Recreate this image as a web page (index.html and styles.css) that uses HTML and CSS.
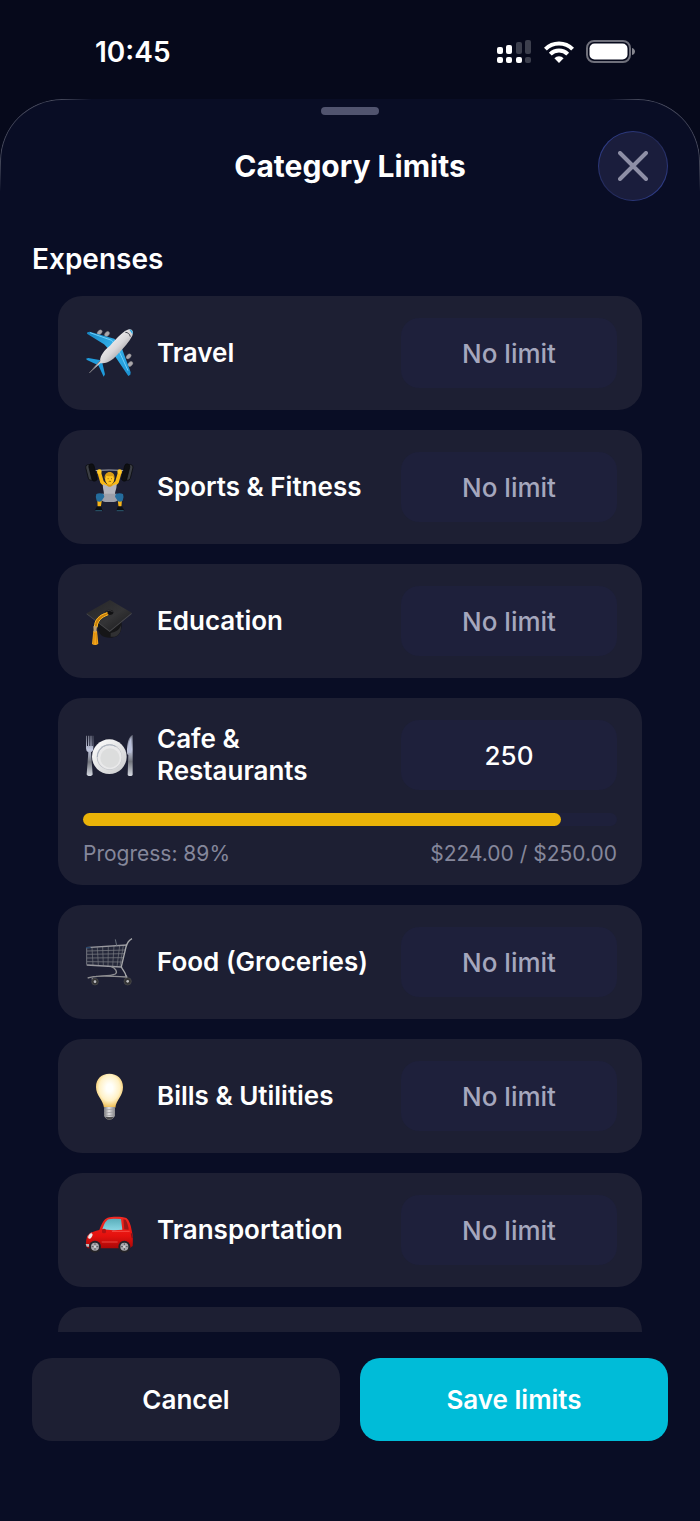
FILE: index.html
```
<!DOCTYPE html>
<html lang="en">
<head>
  <meta charset="UTF-8">
  <meta name="viewport" content="width=device-width, initial-scale=1">
  <title>Category Limits</title>
  <link rel="stylesheet" href="styles.css">
</head>
<body>

<div class="status-bar">
  <span class="time">10:45</span>
  <div class="status-icons">
    <svg width="35" height="24" viewBox="0 0 35 24" fill="#fff">
      <rect x="0" y="7" width="6" height="7" rx="2"/>
      <rect x="9" y="5" width="6" height="9" rx="2"/>
      <rect x="19" y="2" width="6" height="12" rx="2" opacity=".22"/>
      <rect x="28" y="0" width="6" height="14" rx="2" opacity=".22"/>
      <rect x="0" y="17" width="6" height="6" rx="2"/>
      <rect x="9" y="17" width="6" height="6" rx="2"/>
      <rect x="19" y="17" width="6" height="6" rx="2"/>
      <rect x="28" y="17" width="6" height="6" rx="2" opacity=".22"/>
    </svg>
    <svg width="30" height="22" viewBox="0 0 30 22" fill="none" stroke="#fff" stroke-width="4">
      <path d="M1.4 8.1a19.2 19.2 0 0 1 27.2 0"/>
      <path d="M6.3 13.2a12.3 12.3 0 0 1 17.4 0"/>
      <path d="M10.4 17.2a6.5 6.5 0 0 1 9.2 0L15 22z" fill="#fff" stroke="none"/>
    </svg>
    <svg width="50" height="24" viewBox="0 0 50 24">
      <rect x="1" y="1" width="43" height="21" rx="7" fill="none" stroke="#6f707b" stroke-width="2"/>
      <rect x="3.5" y="3.5" width="38" height="16" rx="5" fill="#fff"/>
      <path d="M46 8c4 1 4 6 0 7z" fill="#85868f"/>
    </svg>
  </div>
</div>

<main class="sheet">
  <div class="handle"></div>
  <header class="sheet-header">
    <h1>Category Limits</h1>
    <button class="close" aria-label="Close">
      <svg width="30" height="30" viewBox="0 0 30 30" stroke="#8e8fa6" stroke-width="4" stroke-linecap="round">
        <path d="M2 2l26 26M28 2L2 28"/>
      </svg>
    </button>
  </header>

  <h2>Expenses</h2>

  <div class="list">
    <div class="card">
      <div class="row">
        <svg class="icon" viewBox="99 108 162 162">
          <defs>
            <linearGradient id="wing" x1="0" y1="0" x2="1" y2="1">
              <stop offset="0" stop-color="#1683c0"/><stop offset=".5" stop-color="#35b5ef"/><stop offset="1" stop-color="#1b8fcf"/>
            </linearGradient>
            <linearGradient id="hull" x1="0" y1="0" x2="1" y2="1">
              <stop offset=".25" stop-color="#fafafa"/><stop offset=".52" stop-color="#d9d7da"/><stop offset=".75" stop-color="#8f8c90"/>
            </linearGradient>
          </defs>
          <g fill="#aaa7ab" stroke="#67666c" stroke-width="1">
            <ellipse cx="149" cy="127" rx="9" ry="6" transform="rotate(-45 149 127)"/>
            <ellipse cx="171" cy="132" rx="9" ry="6" transform="rotate(-45 171 132)"/>
            <ellipse cx="236" cy="199" rx="9" ry="6" transform="rotate(-45 236 199)"/>
            <ellipse cx="241" cy="222" rx="9" ry="6" transform="rotate(-45 241 222)"/>
          </g>
          <path d="M112 127l7-2 74 21 20 22 29 79-1 7-6 4-44-65-29-30-51-32z" fill="url(#wing)"/>
          <path d="M108 206l7-2 38 7 4 8 8 34-4 7-16-34-34-16z" fill="#1f9bdc"/>
          <path d="M120 128l65 23 8 10M206 181l28 61" stroke="#6fd0fa" stroke-width="3" fill="none"/>
          <path d="M118 249l32-37c2-18 12-30 30-45 23-25 42-46 57-49 12-1 14 9 10 19-9 19-25 35-43 55-20 23-34 28-53 28z" fill="url(#hull)"/>
          <path d="M226 127c8 0 13 5 15 13" stroke="#45474f" stroke-width="3" fill="none"/>
          <path d="M238 119c8 0 12 6 9 14-3-6-5-9-9-14z" fill="#2caee8"/>
          <path d="M118 249l33-37" stroke="#77757a" stroke-width="3"/>
        </svg>
        <label for="travel">Travel</label>
        <input id="travel" type="text" inputmode="decimal" placeholder="No limit">
      </div>
    </div>

    <div class="card">
      <div class="row">
        <svg class="icon" viewBox="39 60 162 162">
          <path d="M66 93c30-4 72-4 104 0" stroke="#a9abb3" stroke-width="3" fill="none"/>
          <g stroke="#08090b" stroke-width="2">
            <rect x="51" y="73" width="17" height="48" rx="8" fill="#3c3f45" transform="rotate(-14 60 97)"/>
            <rect x="61" y="71" width="16" height="53" rx="8" fill="#0e0f12" transform="rotate(-14 69 98)"/>
            <rect x="168" y="73" width="17" height="48" rx="8" fill="#3c3f45" transform="rotate(14 176 97)"/>
            <rect x="159" y="71" width="16" height="53" rx="8" fill="#0e0f12" transform="rotate(14 167 98)"/>
          </g>
          <path d="M88 98l8 28 16 16M149 98l-8 28-16 16" stroke="#f8b916" stroke-width="11" stroke-linecap="round" stroke-linejoin="round" fill="none"/>
          <circle cx="88" cy="95" r="7" fill="#ffc927"/>
          <circle cx="149" cy="95" r="7" fill="#ffc927"/>
          <path d="M82 178h14l-4 26h-9zM143 178h13l-2 26h-8z" fill="#f6b318"/>
          <path d="M99 132l12 5h16l12-5c3 11-4 21-4 31l4 17c-10 8-32 8-42 0l5-17c0-10-5-20-3-31z" fill="#b4b5bd"/>
          <path d="M96 161h45l8 13c-8 14-20 12-30 12s-22 2-30-12z" fill="#9d9fa9"/>
          <path d="M111 129h16v7c-4 6-12 6-16 0z" fill="#dc980d"/>
          <ellipse cx="119" cy="116" rx="14" ry="18" fill="#ffc523"/>
          <path d="M104 117c-4-28 35-27 29 0l-5-9c-7 2-13 1-20-1z" fill="#d99c15"/>
          <path d="M113 116h3M123 116h3M116 125q4-3 7 0" stroke="#68420b" stroke-width="2" fill="none"/>
          <path d="M79 162q11-5 22 1l2 7-9 14q-7 3-14-2-5-10-1-20zM137 163q11-6 22-1 4 10-1 20-7 5-14 2l-9-14z" fill="#246c9d"/>
          <path d="M81 199h12l5 13H75c0-5 4-7 6-13zM144 199h12c1 5 6 7 7 13h-24z" fill="#0c0f14"/>
          <path d="M76 212h20M140 212h21" stroke="#377b98" stroke-width="2"/>
        </svg>
        <label for="sports">Sports &amp; Fitness</label>
        <input id="sports" type="text" inputmode="decimal" placeholder="No limit">
      </div>
    </div>

    <div class="card">
      <div class="row">
        <svg class="icon" viewBox="39 57 162 162">
          <defs>
            <linearGradient id="cap" x1="0" y1="0" x2="1" y2="1">
              <stop offset="0" stop-color="#252527"/><stop offset=".55" stop-color="#343436"/><stop offset="1" stop-color="#171719"/>
            </linearGradient>
          </defs>
          <path d="M82 135l72-2c3 22 0 42-13 50-14 8-37 7-47-2-9-9-13-25-12-46z" fill="#161618"/>
          <path d="M122 174c16-2 26-10 31-23 1 17-4 26-12 31-7 4-14 4-19 3z" fill="#303032"/>
          <path d="M50 115l70-40 65 38-66 56z" fill="url(#cap)"/>
          <path d="M50 115l69 52 66-54v4l-66 54-69-53z" fill="#48484b"/>
          <ellipse cx="118" cy="112" rx="12" ry="8" fill="#111113"/>
          <path d="M108 109q10-7 20 1" stroke="#4b4b4e" stroke-width="2" fill="none"/>
          <path d="M113 115c-24 8-35 20-36 42" stroke="#c77c08" stroke-width="9" fill="none"/>
          <path d="M112 113c-26 8-38 21-39 43M115 119c-21 8-32 18-34 38" stroke="#ffbd27" stroke-width="3" fill="none"/>
          <path d="M70 167h11l4 39c-5 5-14 5-19 1z" fill="#f3a51b"/>
          <path d="M70 154h11l-2 16h-8z" fill="#c0a06b"/>
          <path d="M73 174l-2 33M78 173l2 33" stroke="#ca7c08" stroke-width="2"/>
        </svg>
        <label for="education">Education</label>
        <input id="education" type="text" inputmode="decimal" placeholder="No limit">
      </div>
    </div>

    <div class="card">
      <div class="row">
        <svg class="icon" viewBox="99 114 162 162">
          <defs>
            <linearGradient id="steel" x1="0" y1="0" x2="0" y2="1">
              <stop offset="0" stop-color="#6d7080"/><stop offset=".35" stop-color="#c2c8df"/><stop offset=".65" stop-color="#72757d"/><stop offset="1" stop-color="#d6dae3"/>
            </linearGradient>
            <linearGradient id="plate" x1="0" y1="0" x2="1" y2="1">
              <stop offset="0" stop-color="#fff"/><stop offset="1" stop-color="#c9cacc"/>
            </linearGradient>
          </defs>
          <path d="M108 137h3v31h3v-31h4v31h3v-31h4v31h3v-31h2v38q0 9-7 12l5 66c0 7-18 7-18 0l5-66q-7-3-7-12z" fill="url(#steel)"/>
          <path d="M248 135v119c0 5-15 5-15 0l2-59q-5-1-4-9c0-25 5-47 17-51z" fill="url(#steel)"/>
          <path d="M244 142c-7 9-10 24-10 46h10z" fill="#b8bfd9"/>
          <circle cx="178" cy="200" r="52" fill="url(#plate)"/>
          <circle cx="178" cy="201" r="38" fill="#bfc2c8"/>
          <circle cx="179" cy="202" r="36" fill="#e9e9ea"/>
          <circle cx="180" cy="204" r="29" fill="#dcdddd"/>
          <path d="M142 201a37 37 0 0 1 55-32" stroke="#aab2bf" stroke-width="3" fill="none"/>
        </svg>
        <label for="cafe">Cafe &amp; Restaurants</label>
        <input id="cafe" type="text" inputmode="decimal" placeholder="No limit" value="250">
      </div>
      <div class="track"><div class="fill" style="width: 89.6%"></div></div>
      <div class="progress-text">
        <span>Progress: 89%</span>
        <span>$224.00 / $250.00</span>
      </div>
    </div>

    <div class="card">
      <div class="row">
        <svg class="icon" viewBox="39 60 162 162" fill="none">
          <path d="M50 98l121-9-18 67-103-6z" fill="#25283a"/>
          <path d="M51 108l115-3M51 118l112-2M51 129l109-1M51 140l106 1" stroke="#85878d" stroke-width="2"/>
          <path d="M66 98l3 53M82 97l3 54M98 96l2 56M115 95l-1 58M132 93l-4 61M149 92l-8 63M160 91l-10 64" stroke="#777a81" stroke-width="2"/>
          <path d="M49 98l122-8M50 150l103 6" stroke="#9a9aa0" stroke-width="4"/>
          <path d="M50 98v51" stroke="#73767f" stroke-width="3"/>
          <path d="M48 98h14" stroke="#28476d" stroke-width="4"/>
          <path d="M186 71c-10 5-15 14-18 25l-14 59c4 11 11 14 14 28" stroke="#a7a8aa" stroke-width="4"/>
          <path d="M136 73l4 19" stroke="#68707b" stroke-width="3"/>
          <path d="M124 155c12 4 20 16 12 22-18 8-57 4-83 12M78 184c32-2 62 0 90 2" stroke="#8f8f92" stroke-width="4"/>
          <path d="M66 190l8 13M168 181l6 18" stroke="#9c9da0" stroke-width="5"/>
          <circle cx="75" cy="200" r="10" fill="#343435" stroke="#4d4d4e" stroke-width="2"/>
          <circle cx="173" cy="199" r="11" fill="#343435" stroke="#4d4d4e" stroke-width="2"/>
          <circle cx="75" cy="200" r="4" fill="#bdbdc0"/>
          <circle cx="173" cy="199" r="4" fill="#bdbdc0"/>
        </svg>
        <label for="food">Food (Groceries)</label>
        <input id="food" type="text" inputmode="decimal" placeholder="No limit">
      </div>
    </div>

    <div class="card">
      <div class="row">
        <svg class="icon" viewBox="39 57 162 162">
          <defs>
            <radialGradient id="glow" cx=".5" cy=".42" r=".58">
              <stop offset=".2" stop-color="#fffffa"/><stop offset=".65" stop-color="#fff1c5"/><stop offset="1" stop-color="#efbd53"/>
            </radialGradient>
            <linearGradient id="socket">
              <stop offset="0" stop-color="#77777a"/><stop offset=".45" stop-color="#e1e0e1"/><stop offset="1" stop-color="#858487"/>
            </linearGradient>
          </defs>
          <path d="M78 111c0-25 17-40 40-40s41 15 41 40c0 27-20 38-23 62h-34c-3-25-24-36-24-62z" fill="url(#glow)"/>
          <path d="M102 171h33v27q-7 11-17 11t-16-11z" fill="url(#socket)"/>
          <path d="M102 180l33-3M102 189l33-3M103 198l31-3" stroke="#98979b" stroke-width="2"/>
          <path d="M106 201h25l-7 8h-12z" fill="#4c4b4e"/>
        </svg>
        <label for="bills">Bills &amp; Utilities</label>
        <input id="bills" type="text" inputmode="decimal" placeholder="No limit">
      </div>
    </div>

    <div class="card">
      <div class="row">
        <svg class="icon" viewBox="39 54 162 162">
          <defs>
            <linearGradient id="paint" x1="0" y1="0" x2="0" y2="1">
              <stop offset="0" stop-color="#f22a23"/><stop offset=".6" stop-color="#e5110e"/><stop offset="1" stop-color="#a90808"/>
            </linearGradient>
            <linearGradient id="glass" x1="0" y1="0" x2="0" y2="1">
              <stop offset="0" stop-color="#5aaebb"/><stop offset="1" stop-color="#8ad5e2"/>
            </linearGradient>
          </defs>
          <path d="M63 180h115v9H63z" fill="#281c23"/>
          <path d="M48 174c0-23 13-34 40-39 7-19 14-33 25-37 17-4 43-3 56 1 9 7 13 20 16 37 4 14 4 31 3 47l-9 7H54c-5-4-7-8-6-16z" fill="url(#paint)"/>
          <path d="M97 133c5-15 10-26 19-30l15-2 22 1 4 32-26 2z" fill="url(#glass)"/>
          <path d="M160 103l7 1c5 9 8 19 9 30l-13-1z" fill="#9b1719"/>
          <path d="M126 139h53M95 171h48M66 143c-8 3-13 8-14 15" stroke="#ff665d" stroke-width="2" fill="none"/>
          <rect x="96" y="131" width="12" height="14" rx="5" fill="#b31313"/>
          <ellipse cx="61" cy="153" rx="5" ry="9" fill="#ecebed" transform="rotate(32 61 153)"/>
          <path d="M184 145l3 14" stroke="#81151a" stroke-width="4"/>
          <path d="M47 177h10l1 8h-8z" fill="#b8b8bb"/>
          <circle cx="75" cy="185" r="18" fill="#242328"/>
          <circle cx="163" cy="185" r="18" fill="#242328"/>
          <circle cx="75" cy="185" r="12" fill="#aaa9ad"/>
          <circle cx="163" cy="185" r="12" fill="#aaa9ad"/>
          <path d="M75 175v20M65 185h20M163 175v20M153 185h20" stroke="#5a595f" stroke-width="3"/>
          <circle cx="75" cy="185" r="4" fill="#d8d7d9"/>
          <circle cx="163" cy="185" r="4" fill="#d8d7d9"/>
        </svg>
        <label for="transport">Transportation</label>
        <input id="transport" type="text" inputmode="decimal" placeholder="No limit">
      </div>
    </div>

    <div class="card"></div>
  </div>

  <footer class="actions">
    <button class="cancel">Cancel</button>
    <button class="save">Save limits</button>
  </footer>
</main>

</body>
</html>
```

FILE: styles.css
```
* {
  box-sizing: border-box;
}
body {
  margin: 0;
  height: 100vh;
  display: flex;
  flex-direction: column;
  background: #06091b;
  color: #fff;
  font-family: Inter, "Liberation Sans", sans-serif;
}
button, input {
  font-family: inherit;
  border: none;
}
button {
  cursor: pointer;
}
h1, h2 {
  margin: 0;
  font-weight: 600;
}

.status-bar {
  display: flex;
  justify-content: space-between;
  align-items: center;
  padding: 32px 64px 27px 95px;
}
.time {
  font-size: 28px;
  line-height: 40px;
  font-weight: 600;
}
.status-icons {
  display: flex;
  align-items: center;
  gap: 12px;
}

.sheet {
  position: relative;
  flex: 1;
  min-height: 0;
  display: flex;
  flex-direction: column;
  padding-top: 8px;
  background: #090d25;
  border-radius: 62px 62px 0 0;
}
/* thin highlight that only shows round the top corners */
.sheet::before {
  content: "";
  position: absolute;
  top: 0;
  left: 0;
  right: 0;
  height: 92px;
  border: 1px solid rgba(255, 255, 255, 0.25);
  border-bottom: none;
  border-radius: 62px 62px 0 0;
  mask-image:
    linear-gradient(to right, #000 60px, transparent 92px, transparent calc(100% - 92px), #000 calc(100% - 60px)),
    linear-gradient(#000 60px, transparent);
  mask-composite: intersect;
  pointer-events: none;
}
.handle {
  width: 58px;
  height: 8px;
  margin: 0 auto;
  border-radius: 4px;
  background: #51546f;
}
.sheet-header {
  display: grid;
  grid-template-columns: 70px 1fr 70px;
  align-items: center;
  padding: 16px 32px 0;
}
h1 {
  grid-column: 2;
  text-align: center;
  font-size: 30px;
  line-height: 40px;
  font-weight: 700;
}
.close {
  display: flex;
  justify-content: center;
  align-items: center;
  height: 70px;
  padding: 0;
  border: 1px solid transparent;
  border-radius: 50%;
  background:
    linear-gradient(#1a1d3c, #1a1d3c) padding-box,
    linear-gradient(135deg, #34459c, #242b5c 45%, #242b5c 55%, #34459c) border-box;
}
h2 {
  padding: 38px 32px 17px;
  font-size: 28px;
  line-height: 40px;
}

.list {
  flex: 1;
  min-height: 0;
  overflow-y: auto;
  scrollbar-width: none;
  display: flex;
  flex-direction: column;
  gap: 20px;
  padding: 0 58px;
}
.card {
  flex-shrink: 0;
  min-height: 114px;
  padding: 22px 25px;
  border-radius: 24px;
  background: #1d1f33;
}
.row {
  display: flex;
  align-items: center;
  gap: 20px;
}
.icon {
  flex-shrink: 0;
  width: 54px;
  height: 54px;
}
.row label {
  flex: 1;
  font-size: 26px;
  line-height: 32px;
  font-weight: 600;
}
.row input {
  width: 216px;
  height: 70px;
  padding: 0;
  border-radius: 18px;
  background: #1e203b;
  color: #fff;
  font-size: 26px;
  font-weight: 500;
  text-align: center;
}
.row input::placeholder {
  color: #a5a7bd;
  opacity: 1;
}
.track {
  height: 13px;
  margin-top: 23px;
  border-radius: 7px;
  background: #1e203b;
}
.fill {
  height: 100%;
  border-radius: 7px;
  background: #eab308;
}
.progress-text {
  display: flex;
  justify-content: space-between;
  margin-top: 19px;
  color: #85879b;
  font-size: 21px;
  line-height: 18px;
}

.actions {
  display: grid;
  grid-template-columns: 1fr 1fr;
  gap: 20px;
  padding: 26px 32px 80px;
}
.actions button {
  height: 83px;
  border-radius: 20px;
  color: #fff;
  font-size: 26px;
  font-weight: 600;
}
.actions .cancel {
  background: #1d1f33;
}
.actions .save {
  background: #00bcd8;
}
```
